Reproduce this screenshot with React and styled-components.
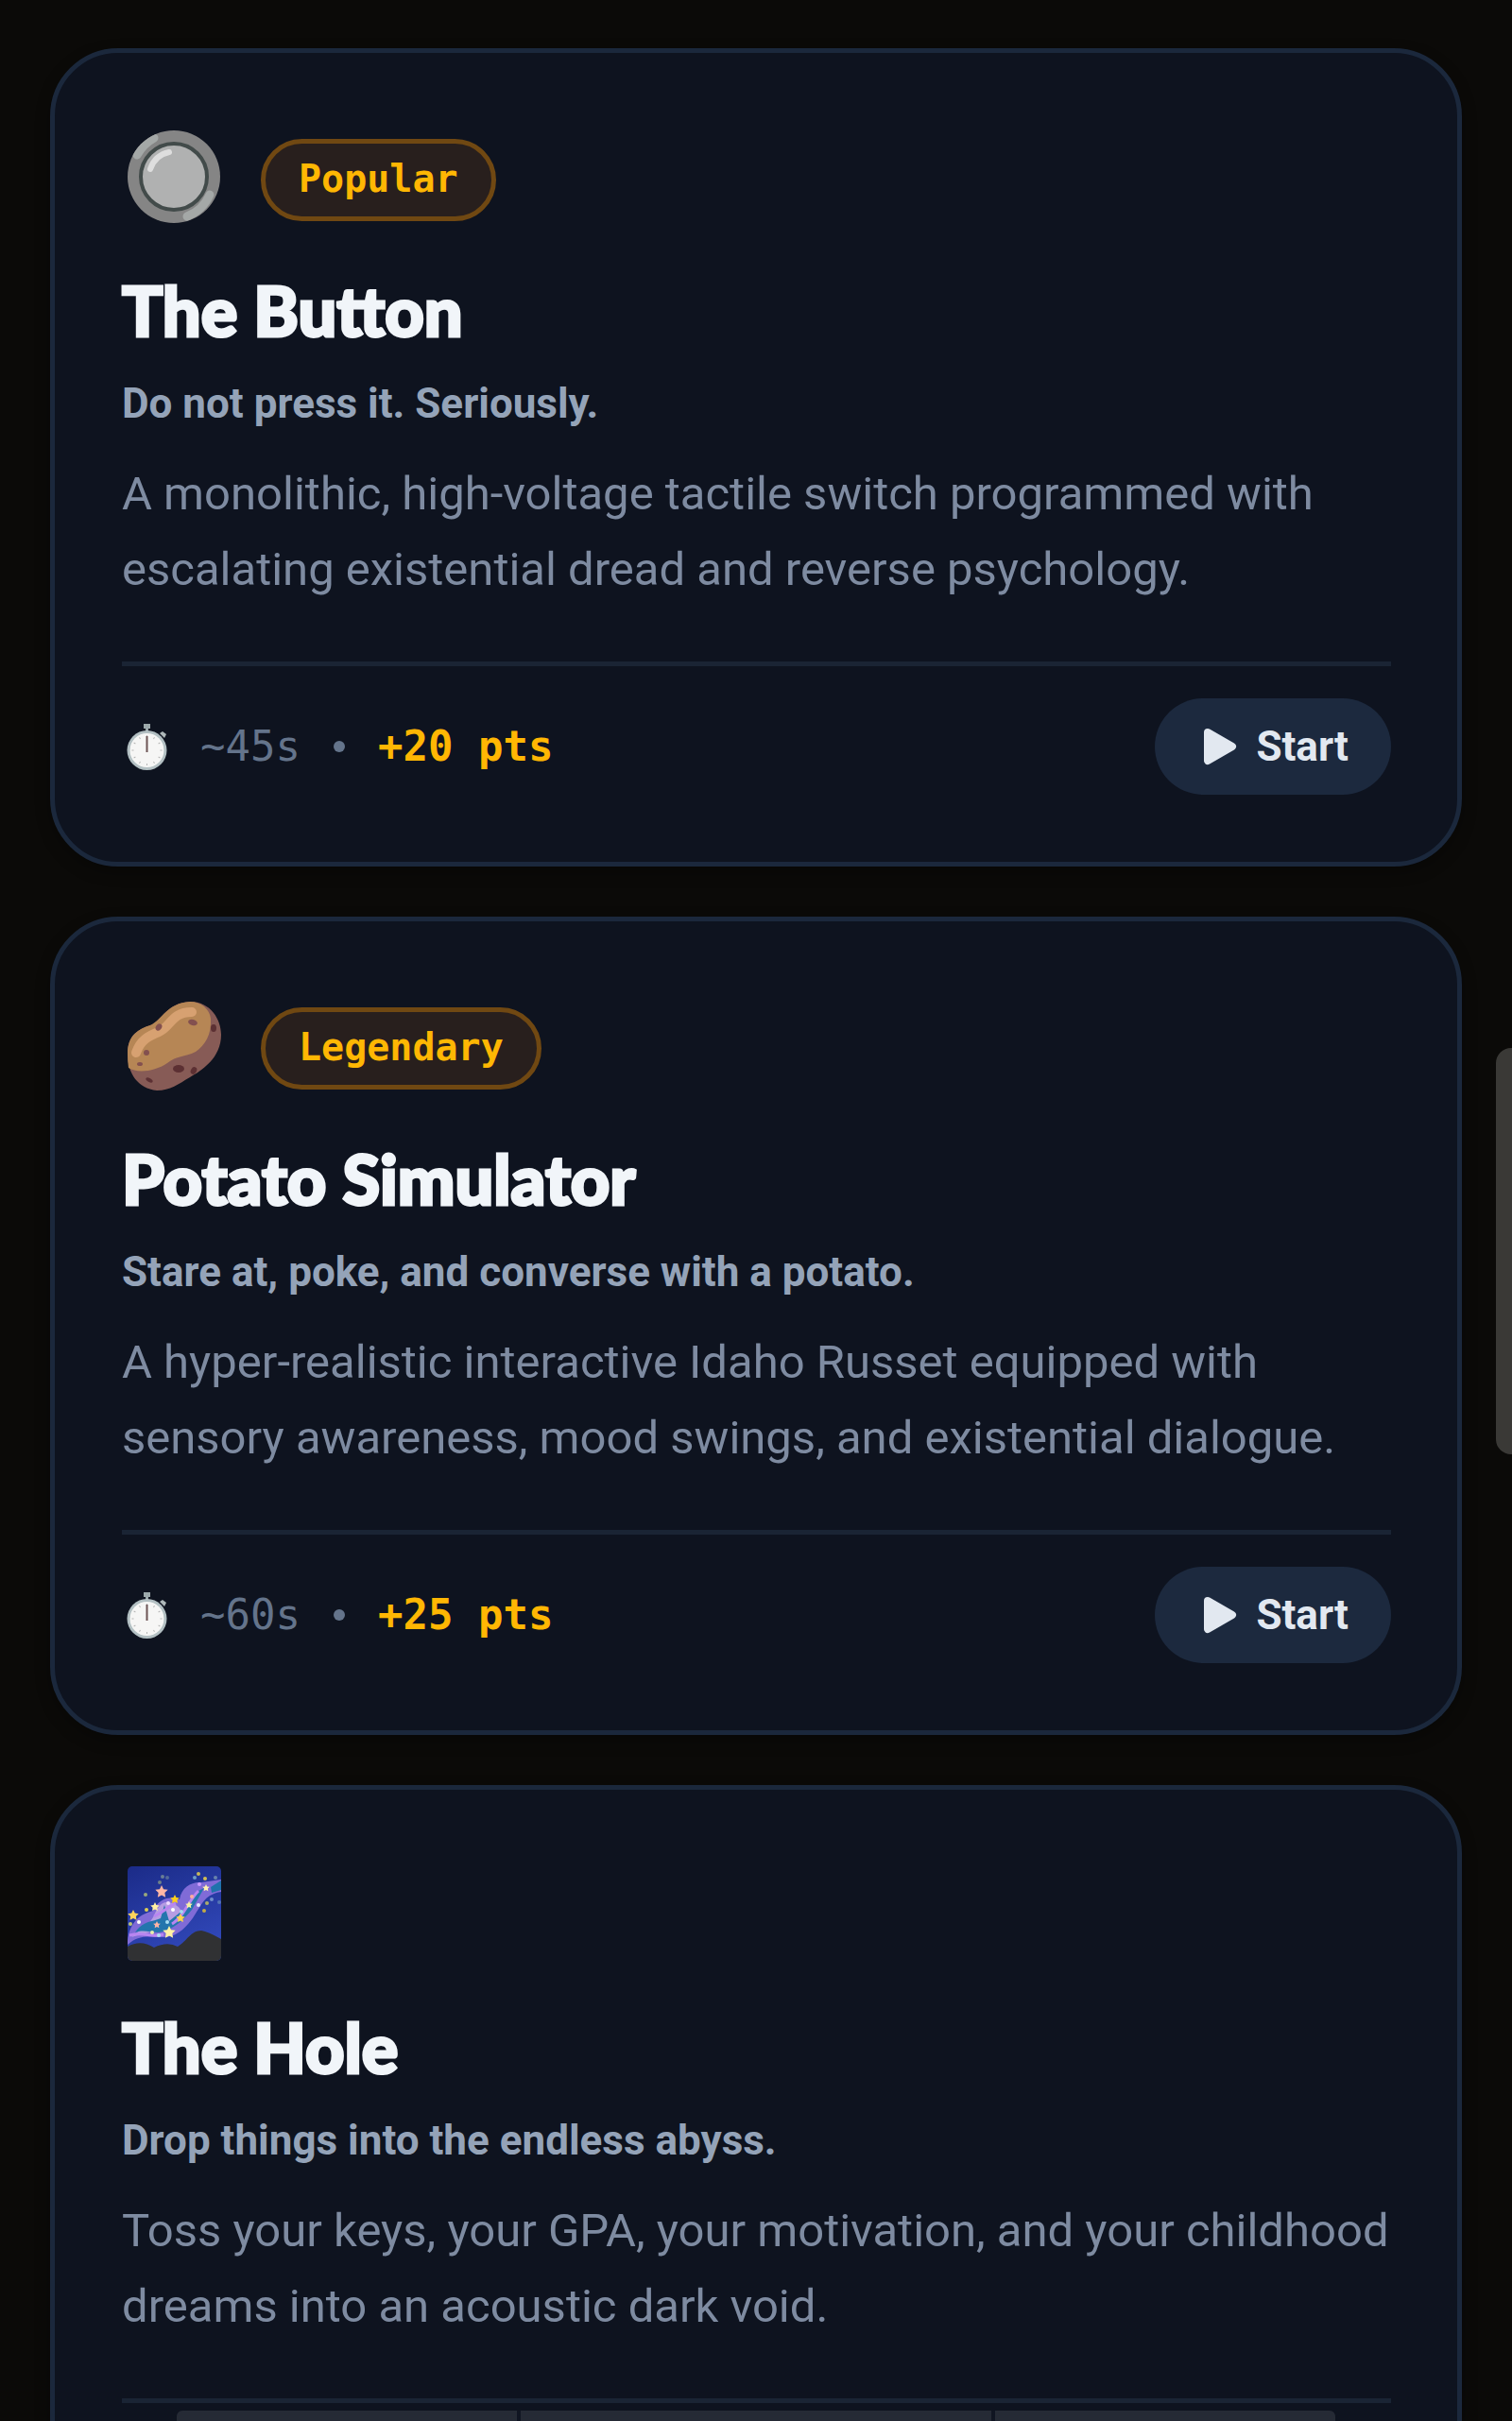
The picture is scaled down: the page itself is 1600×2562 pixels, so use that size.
import React from "react";
import styled, { createGlobalStyle } from "styled-components";

const sans = `Roboto, "Liberation Sans", sans-serif`;
const mono = `"DejaVu Sans Mono", "Liberation Mono", monospace`;

const GlobalStyle = createGlobalStyle`
  * { box-sizing: border-box; }
  body { margin: 0; background: #0b0a08; font-family: ${sans}; }
`;

const Screen = styled.main`
  position: relative;
  height: 100vh;
  overflow: hidden;
  padding: 51px 53px 0;
  background: #0b0a08;
`;

const CardList = styled.div`
  display: flex;
  flex-direction: column;
  gap: 53px;
`;

const Card = styled.article`
  display: flex;
  flex-direction: column;
  padding: 71px 70px 71px 71px;
  border: 5px solid #1b283c;
  border-radius: 72px;
  background: #0e131f;
  box-shadow: 0 6px 16px rgba(0, 0, 0, 0.3);
`;

const CardTop = styled.header`
  display: flex;
  align-items: center;
  gap: 35px;
  height: 126px;
`;

const Emoji = styled.svg`
  flex: none;
  width: 112px;
  height: 112px;
`;

const Badge = styled.span`
  padding: 0 35px 2px;
  border: 5px solid #704812;
  border-radius: 44px;
  background: #281f1d;
  color: #ffb703;
  font: 700 40px/75px ${mono};
`;

const Title = styled.h2`
  margin: 28px 0 20px;
  color: #f1f5f9;
  font: 900 72px/94px Lato, ${sans};
  -webkit-text-stroke: 3px #f1f5f9;
`;

const Tagline = styled.p`
  margin: 0 0 24px;
  color: #94a3b8;
  font: 700 44px/64px ${sans};
`;

const Description = styled.p`
  margin: 0 0 57px;
  color: #7e8ba1;
  font: 400 49px/80px ${sans};
`;

const CardFooter = styled.footer`
  display: flex;
  align-items: center;
  justify-content: space-between;
  min-height: 141px;
  padding-top: 34px;
  border-top: 5px solid #1a2434;
`;

const Meta = styled.div`
  display: flex;
  align-items: center;
  gap: 35px;
  color: #64748b;
  font: 400 44px/60px ${mono};
`;

const Points = styled.span`
  color: #ffb703;
  font-weight: 700;
`;

const Watch = styled.svg`
  width: 48px;
  height: 60px;
`;

const Dot = styled.span`
  width: 12px;
  height: 12px;
  border-radius: 50%;
  background: #64748b;
`;

const StartButton = styled.button`
  display: flex;
  align-items: center;
  gap: 18px;
  height: 102px;
  padding: 0 45px 0 49px;
  border: 0;
  border-radius: 51px;
  background: #1c293e;
  color: #e2e8f0;
  font: 700 44px/64px ${sans};
`;

const PlayIcon = styled.svg`
  width: 40px;
  height: 40px;
`;

const ScrollThumb = styled.div`
  position: absolute;
  top: 1109px;
  right: 0;
  width: 17px;
  height: 430px;
  border-radius: 16px 0 0 16px;
  background: #3a3936;
`;

const BottomBar = styled.nav`
  position: absolute;
  right: 187px;
  bottom: 0;
  left: 187px;
  display: grid;
  grid-template-columns: 360px 1fr 360px;
  gap: 4px;
  height: 11px;
  overflow: hidden;
  border-radius: 6px 6px 0 0;
  background: #101522;
`;

const BarSegment = styled.div`
  background: #252a35;
`;

function ButtonEmoji() {
  return (
    <Emoji viewBox="0 0 112 112" aria-hidden="true">
      <defs>
        <clipPath id="rim"><circle cx="55" cy="53" r="49" /></clipPath>
      </defs>
      <circle cx="55" cy="53" r="49" fill="#858585" />
      <g clipPath="url(#rim)">
        <path d="M16 30A46 46 0 0 1 34 12" fill="none" stroke="#a4a8a7" strokeWidth="9" strokeLinecap="round" />
        <path d="M93 72A44 44 0 0 1 69 95" fill="none" stroke="#a4a8a7" strokeWidth="9" strokeLinecap="round" />
      </g>
      <circle cx="55" cy="53" r="35" fill="#b0b1b1" stroke="#424b4a" strokeWidth="4" />
      <path d="M30 45Q35 30 50 27" fill="none" stroke="#dedede" strokeWidth="6" strokeLinecap="round" />
    </Emoji>
  );
}

function PotatoEmoji() {
  return (
    <Emoji viewBox="0 0 112 112" aria-hidden="true">
      <path
        d="M6 62C6 42 18 36 30 32C42 27 48 8 72 7C94 7 105 26 105 42C105 67 84 80 72 87C60 94 51 101 37 101C17 99 6 83 6 62Z"
        fill="#875b56"
      />
      <path
        d="M6 62C6 42 18 36 30 32C42 27 48 8 72 7C84 7 93 15 94 25C95 42 88 53 78 60C66 66 58 64 48 72C35 81 16 83 7 77Q6 70 6 62Z"
        fill="#b68655"
      />
      <path d="M15 61C20 47 29 43 39 39C52 34 52 18 74 18" fill="none" stroke="#d7a171" strokeWidth="10" strokeLinecap="round" />
      <g fill="#83504f">
        <ellipse cx="75" cy="29" rx="5" ry="3" transform="rotate(15 75 29)" />
        <ellipse cx="39" cy="34" rx="3" ry="4" transform="rotate(35 39 34)" />
        <circle cx="26" cy="61" r="3" />
        <ellipse cx="19" cy="73" rx="3" ry="2" />
      </g>
      <g fill="#5c3033">
        <ellipse cx="60" cy="78" rx="6" ry="4" />
        <ellipse cx="76" cy="80" rx="3" ry="4" transform="rotate(30 76 80)" />
        <ellipse cx="97" cy="35" rx="3" ry="4" />
        <ellipse cx="29" cy="90" rx="4" ry="2" transform="rotate(30 29 90)" />
      </g>
    </Emoji>
  );
}

const bigStars = [
  [42, 30, 7, "#ffb7a5"],
  [56, 38, 5, "#ffd019"],
  [12, 55, 6, "#ffd35b"],
  [35, 46, 5, "#fff0a3"],
  [71, 44, 4, "#f6f2a3"],
  [62, 58, 5, "#ffd44e"],
  [37, 65, 4, "#ffb4a6"],
  [50, 73, 7, "#fff2a4"],
  [89, 26, 4, "#fff3b0"],
];

const smallStars = [
  [25, 33, "#99a87c"], [81, 11, "#c5b65b"], [88, 16, "#d2bd53"], [99, 15, "#6882ac"],
  [77, 15, "#6b9cc6"], [74, 35, "#ffad9b"], [81, 44, "#e4e6ff"], [90, 42, "#acab6b"],
  [95, 38, "#708ecb"], [103, 41, "#5274b4"], [87, 50, "#c3aa45"], [26, 49, "#ddce54"],
  [18, 62, "#ffffff"], [9, 64, "#bcc377"], [32, 73, "#e8efab"], [54, 49, "#ffffff"],
  [49, 42, "#efdaff"], [63, 51, "#a3d8ef"], [48, 62, "#a5dcf2"], [82, 22, "#cb9bff"],
  [39, 76, "#aedfed"], [43, 14, "#687e95"], [48, 15, "#526999"], [40, 20, "#6d8188"],
];

const starPath = (x, y, r) => {
  const points = [];
  for (let i = 0; i < 10; i++) {
    const angle = (i * Math.PI) / 5 - Math.PI / 2;
    const radius = i % 2 ? r * 0.5 : r;
    points.push(`${x + Math.cos(angle) * radius},${y + Math.sin(angle) * radius}`);
  }
  return points.join(" ");
};

function GalaxyEmoji() {
  return (
    <Emoji viewBox="0 0 112 112" aria-hidden="true">
      <defs>
        <clipPath id="sky"><rect x="6" y="3" width="99" height="100" rx="5" /></clipPath>
        <linearGradient id="night" x1="0" y1="0" x2="0.4" y2="1">
          <stop stopColor="#1b2b88" />
          <stop offset="1" stopColor="#3047b8" />
        </linearGradient>
      </defs>
      <g clipPath="url(#sky)">
        <rect x="6" y="3" width="99" height="100" fill="url(#night)" />
        <path d="M6 82C8 63 18 54 33 50C39 38 48 34 61 38C63 25 74 19 84 20L105 17V30C88 33 86 41 78 53C69 68 57 79 42 78C25 77 17 76 6 86Z" fill="#806bd7" />
        <path d="M10 78C22 68 25 69 33 57C38 46 42 38 53 42C66 47 66 57 55 64C44 71 25 73 10 78Z" fill="#b79de3" />
        <path d="M14 73C22 61 31 62 41 58L45 44L50 61L70 45L79 30L87 26L74 49C63 62 57 67 44 72C33 75 25 69 14 73Z" fill="#2375ad" />
        <path d="M8 76C25 72 30 79 44 75M53 64C66 56 70 40 81 29M34 56C45 51 50 45 57 42" fill="none" stroke="#b985f1" strokeWidth="3" />
        <path d="M94 25L105 18V28L95 31Z" fill="#1f72ac" />
        {smallStars.map(([x, y, color]) => <circle key={`${x}-${y}`} cx={x} cy={y} r="2" fill={color} />)}
        {bigStars.map(([x, y, r, color]) => <polygon key={`${x}-${y}`} points={starPath(x, y, r)} fill={color} />)}
        <path d="M6 88Q20 80 34 89Q48 82 59 88C69 82 73 71 84 71Q91 72 105 80V103H6Z" fill="#303133" />
      </g>
    </Emoji>
  );
}

function Stopwatch() {
  const ticks = Array.from({ length: 12 }, (_, i) => i * 30);
  return (
    <Watch viewBox="0 0 48 60" aria-hidden="true">
      <path d="M23 6h7v5h-2v6h-3v-6h-2z" fill="#9ba8aa" />
      <path d="M40 16l3-2 4 3-2 4z" fill="#aeb8b9" />
      <circle cx="26.5" cy="34" r="21" fill="#b3c0c3" />
      <circle cx="26.5" cy="34" r="18" fill="#f6f6f5" />
      {ticks.map((deg) => (
        <path key={deg} d="M26.500 18v2" stroke="#b7b7b7" strokeWidth="1" transform={`rotate(${deg} 26.5 34)`} />
      ))}
      <path d="M26.500 19v17" stroke="#6d5555" strokeWidth="2" />
    </Watch>
  );
}

const experiments = [
  {
    icon: ButtonEmoji,
    badge: "Popular",
    title: "The Button",
    tagline: "Do not press it. Seriously.",
    text: "A monolithic, high-voltage tactile switch programmed with escalating existential dread and reverse psychology.",
    time: "~45s",
    points: "+20 pts",
  },
  {
    icon: PotatoEmoji,
    badge: "Legendary",
    title: "Potato Simulator",
    tagline: "Stare at, poke, and converse with a potato.",
    text: "A hyper-realistic interactive Idaho Russet equipped with sensory awareness, mood swings, and existential dialogue.",
    time: "~60s",
    points: "+25 pts",
  },
  {
    icon: GalaxyEmoji,
    title: "The Hole",
    tagline: "Drop things into the endless abyss.",
    text: "Toss your keys, your GPA, your motivation, and your childhood dreams into an acoustic dark void.",
  },
];

function ExperimentCard({ icon: Icon, badge, title, tagline, text, time, points }) {
  return (
    <Card>
      <CardTop>
        <Icon />
        {badge && <Badge>{badge}</Badge>}
      </CardTop>
      <Title>{title}</Title>
      <Tagline>{tagline}</Tagline>
      <Description>{text}</Description>
      <CardFooter>
        {points && (
          <>
            <Meta>
              <Stopwatch />
              <span>{time}</span>
              <Dot />
              <Points>{points}</Points>
            </Meta>
            <StartButton type="button">
              <PlayIcon viewBox="0 0 40 40" aria-hidden="true">
                <path d="M7 5L33 20L7 35Z" fill="#e2e8f0" stroke="#e2e8f0" strokeWidth="8" strokeLinejoin="round" />
              </PlayIcon>
              Start
            </StartButton>
          </>
        )}
      </CardFooter>
    </Card>
  );
}

export default function App() {
  return (
    <Screen>
      <GlobalStyle />
      <CardList>
        {experiments.map((item) => <ExperimentCard key={item.title} {...item} />)}
      </CardList>
      <ScrollThumb />
      <BottomBar aria-label="Page navigation">
        <BarSegment />
        <BarSegment />
        <BarSegment />
      </BottomBar>
    </Screen>
  );
}
